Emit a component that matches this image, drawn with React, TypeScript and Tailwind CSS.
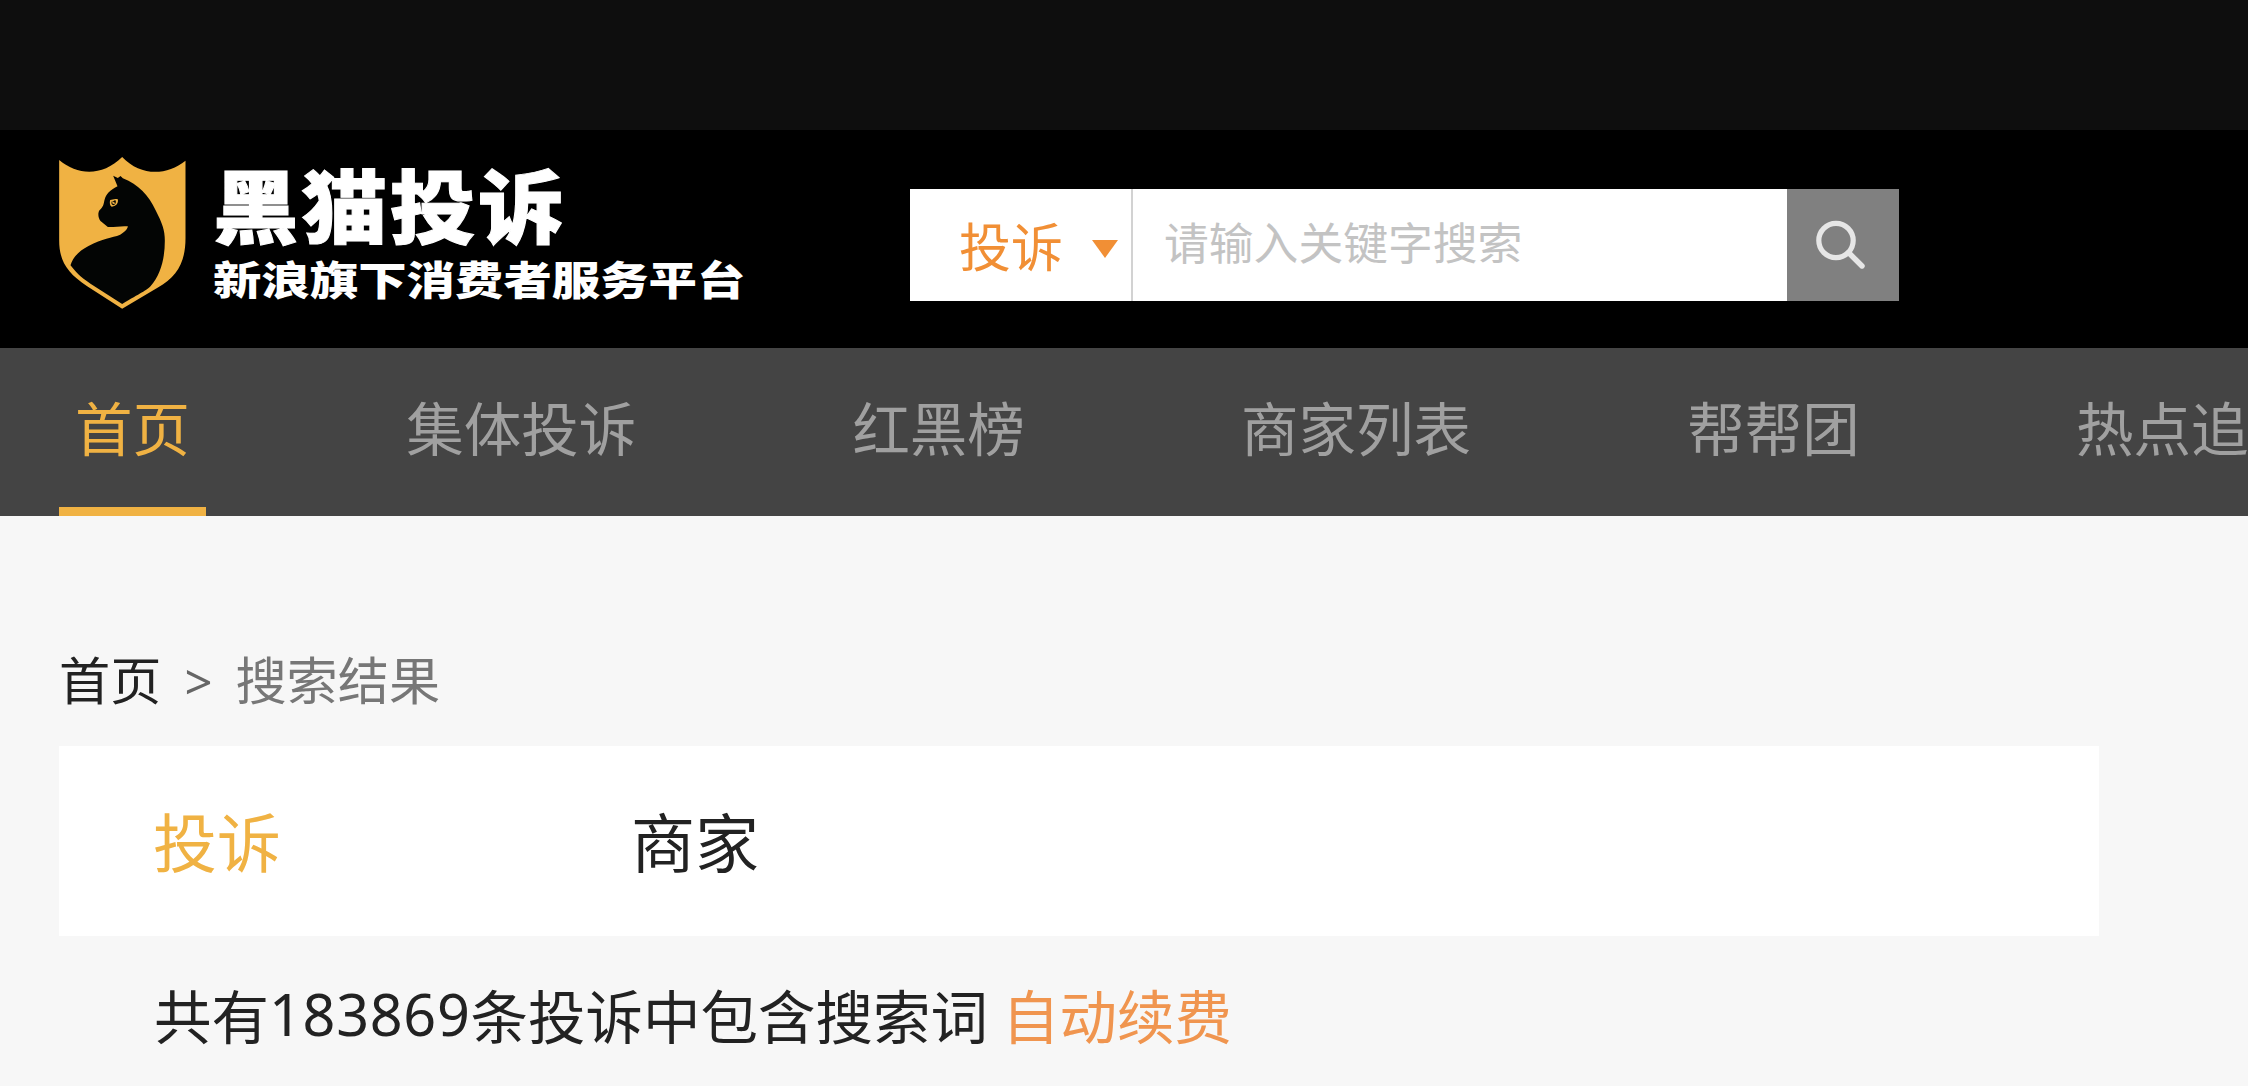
const navItems = ["首页", "集体投诉", "红黑榜", "商家列表", "帮帮团", "热点追踪"];

function Logo() {
  return (
    <div className="flex h-[217px] w-[851px] shrink-0 items-start pt-[27px]">
      <svg viewBox="57 111 380 456" className="h-[152px] w-[127px] shrink-0">
        <path
          fill="#f0b243"
          d="M57 120C114 168 187 169 246 111C301 169 379 168 436 122V355C436 425 412 470 352 503L246 566L141 499C82 459 57 425 57 360Z"
        />
        <path
          fill="#030504"
          d="M219 167L233 174L241 168L248 175C295 194 326 227 346 270C366 309 374 331 374 362C374 417 361 465 331 499C319 512 301 519 246 552L151 491C119 470 106 455 91 436C98 412 117 392 145 378C187 355 215 354 240 344C252 338 262 328 263 319C243 317 222 322 203 321L181 303C173 293 173 278 178 271C190 260 190 253 193 240C198 222 209 211 232 199Z"
        />
        <path fill="#f0b243" d="M210 240C217 240 222 235 233 238C235 249 229 259 215 260C209 258 208 247 210 240Z" />
        <path fill="#030504" d="M215 244C219 247 220 240 226 241C229 248 225 255 219 256C213 254 213 249 215 244Z" />
        <path fill="#f0b243" d="M217 244L225 249L222 253L216 250Z" />
      </svg>
      <div className="flex flex-col items-start whitespace-nowrap pl-[27px] pt-[6px] font-black text-white">
        <span className="h-[89px] origin-left scale-x-[1.07] text-[80px] leading-[78px] tracking-[2.6px] [-webkit-text-stroke:1px_white]">
          黑猫投诉
        </span>
        <span className="origin-left scale-x-[1.21] text-[40px] leading-[52px]">新浪旗下消费者服务平台</span>
      </div>
    </div>
  );
}

function SearchBox() {
  return (
    <div className="mt-[58.5px] flex h-[112px] bg-white">
      <div className="flex w-[223px] items-center border-r-2 border-[#d2d2d2] pl-[49px] text-[#f18f35]">
        <span className="text-[52px] leading-none">投诉</span>
        <svg viewBox="0 0 26 18" className="ml-[29px] mt-2 h-[18px] w-[26px]">
          <path fill="currentColor" d="M0 0H26L13 18Z" />
        </svg>
      </div>
      <div className="flex w-[654px] items-center pb-[7px] pl-[31px] text-[44.8px] leading-none text-[#c3c3c3]">
        请输入关键字搜索
      </div>
      <div className="flex w-[112px] items-center justify-center bg-[#808080]">
        <svg viewBox="0 0 50 50" className="-ml-[4px] h-[50px] w-[50px]" fill="none" stroke="#e6e6e6">
          <circle cx="20" cy="20.5" r="17.2" strokeWidth="5.2" />
          <path d="M32.5 32.5L46 46" strokeWidth="5.4" strokeLinecap="round" />
        </svg>
      </div>
    </div>
  );
}

export default function App() {
  return (
    <div className="h-[1086px] w-[2248px] overflow-hidden bg-[#f7f7f7] font-['Noto_Sans_CJK_SC',sans-serif] text-[#222]">
      <div className="h-[130px] bg-[#0e0e0e]" />
      <header className="flex h-[217.5px] bg-black pl-[59px]">
        <Logo />
        <SearchBox />
      </header>
      <nav className="flex h-[168.5px] gap-[184.2px] bg-[#444] pl-[59px]">
        {navItems.map((item, i) => (
          <div
            key={item}
            className={
              i === 0
                ? "shrink-0 border-b-[9px] border-[#f0b243] px-4 text-[57.5px] leading-[156px] text-[#f0b243]"
                : "shrink-0 px-4 text-[57.5px] leading-[156px] text-[#a0a0a0]"
            }
          >
            {item}
          </div>
        ))}
      </nav>
      <main className="pl-[59px]">
        <div className="flex h-[229.5px] items-end pb-[30px] text-[51.2px] leading-[76px]">
          <span>首页</span>
          <span className="w-[74px] pb-[2px] text-center font-['Noto_Sans'] text-[49px] leading-[66px] text-[#666]">&gt;</span>
          <span className="text-[#777]">搜索结果</span>
        </div>
        <div className="flex h-[190px] w-[2040px] items-center gap-[350px] bg-white pb-[3px] pl-[94px] text-[64px]">
          <span className="text-[#f0b243]">投诉</span>
          <span>商家</span>
        </div>
        <p className="flex pl-[95px] pt-[35px] text-[57.5px] leading-[86px]">
          共有
          <span className="font-['Noto_Sans'] tracking-[0.7px]">183869</span>
          条投诉中包含搜索词
          <span className="ml-[14px] text-[#f0954f]">自动续费</span>
        </p>
      </main>
    </div>
  );
}
